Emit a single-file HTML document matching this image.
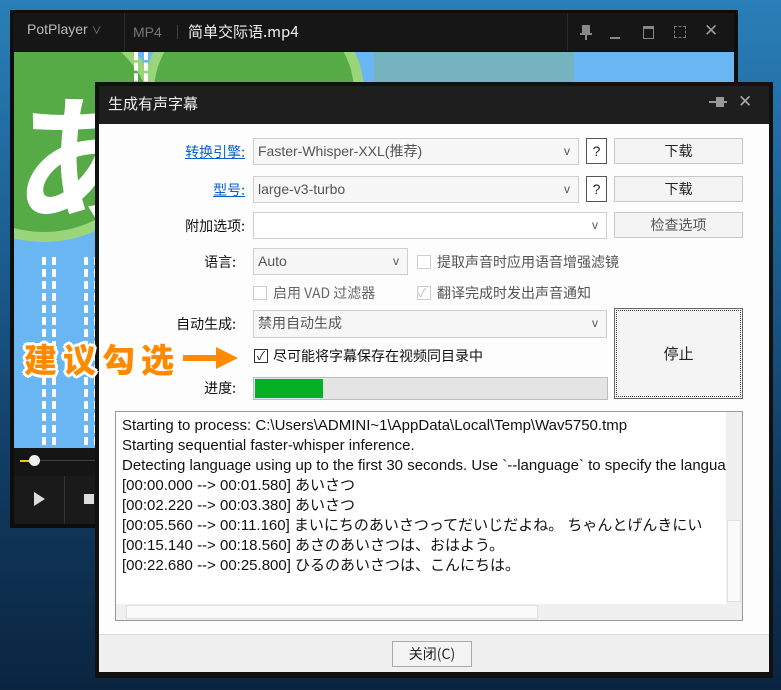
<!DOCTYPE html>
<html><head><meta charset="utf-8"><style>
*{box-sizing:border-box;margin:0;padding:0}
body{width:781px;height:690px;overflow:hidden;position:relative;background:linear-gradient(180deg,#2a7fb8 0%,#1a5a8c 40%,#0f3558 75%,#0a2440 100%);font-family:"Liberation Sans","Noto Sans CJK SC",sans-serif;font-size:14px;color:#111}
.a{position:absolute}
.cjk{font-family:"Noto Sans CJK SC","Liberation Sans",sans-serif}
.combo{position:absolute;background:#f7f7f7;border:1px solid #cfcfcf;color:#555;font-size:14px;padding-left:4px;line-height:25px}
.combo i{position:absolute;right:8px;top:0;font-style:normal;color:#555;font-size:12px}
.btn{position:absolute;background:#f4f4f4;border:1px solid #c8c8c8;text-align:center;color:#222;font-size:14px;line-height:24px}
.lbl{position:absolute;text-align:right;font-size:14px}
.cb{position:absolute;width:14px;height:14px;border:1px solid #888;background:#fff}
.log div{height:20px;line-height:20px;white-space:nowrap}
.ic{position:absolute;top:20px;color:#999;font-size:15px}
</style></head><body>
<!-- player -->
<div class="a" style="left:10px;top:10px;width:728px;height:518px;background:#0d0d0d"></div>
<div class="a" style="left:13px;top:13px;width:721px;height:38px;background:#161616"></div>
<div class="a" style="left:27px;top:21px;color:#bbb;font-size:14px">PotPlayer <span style="font-size:10px;color:#888">&#8744;</span></div>
<div class="a" style="left:124px;top:13px;width:1px;height:38px;background:#2a2a2a"></div>
<div class="a" style="left:133px;top:24px;color:#777;font-size:14px">MP4</div>
<div class="a" style="left:177px;top:25px;width:1px;height:14px;background:#444"></div>
<div class="a cjk" style="left:188px;top:21px;color:#eee;font-size:15px">简单交际语.mp4</div>
<div class="a" style="left:567px;top:13px;width:1px;height:38px;background:#2a2a2a"></div>
<div class="a" style="left:582px;top:25px;width:8px;height:8px;background:#888"></div>
<div class="a" style="left:580px;top:33px;width:12px;height:2px;background:#888"></div>
<div class="a" style="left:585px;top:35px;width:2px;height:5px;background:#888"></div>
<div class="a" style="left:610px;top:37px;width:10px;height:2px;background:#888"></div>
<div class="a" style="left:643px;top:26px;width:11px;height:13px;border:1px solid #888;border-top:3px solid #888"></div>
<div class="a" style="left:674px;top:26px;width:12px;height:12px;border:1px dashed #777"></div>
<div class="ic" style="left:704px;top:21px;font-size:17px">✕</div>
<div class="a" style="left:14px;top:52px;width:720px;height:396px;background:#6ab6f2;overflow:hidden">
 <div class="a" style="left:-90px;top:-40px;width:240px;height:230px;border-radius:50%;background:#56ab47;border:10px solid #9ad57c"></div>
 <div class="a" style="left:130px;top:-60px;width:220px;height:200px;border-radius:50%;background:#56ab47;border:10px solid #9ad57c"></div>
 <div class="a cjk" style="left:0px;top:30px;color:#fff;font-size:140px;font-weight:bold;line-height:1">あ</div>
 <div class="a" style="left:28px;top:205px;width:14px;height:200px;border-left:4px dashed #fff;border-right:4px dashed #fff"></div>
 <div class="a" style="left:70px;top:205px;width:14px;height:200px;border-left:4px dashed #fff;border-right:4px dashed #fff"></div>
 <div class="a" style="left:120px;top:0;width:14px;height:40px;border-left:4px dashed #fff;border-right:4px dashed #fff"></div>
 <div class="a" style="left:360px;top:0;width:200px;height:30px;background:#7fb08a;opacity:.5"></div>
</div>
<div class="a" style="left:14px;top:448px;width:720px;height:28px;background:#151515"></div>
<div class="a" style="left:20px;top:460px;width:14px;height:2px;background:#e8c800"></div>
<div class="a" style="left:29px;top:455px;width:11px;height:11px;border-radius:50%;background:#eee"></div>
<div class="a" style="left:40px;top:460px;width:60px;height:1px;background:#444"></div>
<div class="a" style="left:14px;top:476px;width:720px;height:48px;background:#1a1a1a"></div>
<div class="a" style="left:64px;top:476px;width:1px;height:48px;background:#333"></div>
<div class="a" style="left:34px;top:492px;width:0;height:0;border-left:11px solid #ddd;border-top:7px solid transparent;border-bottom:7px solid transparent"></div>
<div class="a" style="left:84px;top:494px;width:10px;height:10px;background:#ddd"></div>
<!-- dialog -->
<div class="a" style="left:95px;top:82px;width:678px;height:596px;background:#111"></div>
<div class="a" style="left:99px;top:86px;width:670px;height:38px;background:#1e1e1e"></div>
<div class="a cjk" style="left:108px;top:93px;color:#eee;font-size:15px">生成有声字幕</div>
<div class="a" style="left:709px;top:101px;width:8px;height:2px;background:#999"></div>
<div class="a" style="left:716px;top:97px;width:8px;height:10px;background:#999"></div>
<div class="a" style="left:724px;top:101px;width:3px;height:2px;background:#999"></div>
<div class="a" style="left:738px;top:92px;color:#aaa;font-size:17px">✕</div>
<div class="a" style="left:99px;top:124px;width:670px;height:511px;background:#fdfdfd"></div>
<div class="a" style="left:99px;top:634px;width:670px;height:38px;background:#f0f0f0;border-top:1px solid #ddd"></div>

<div class="lbl cjk" style="left:140px;top:142px;width:105px;color:#0b5fd0;text-decoration:underline">转换引擎:</div>
<div class="combo" style="left:253px;top:138px;width:326px;height:27px">Faster-Whisper-XXL(推荐)<i>v</i></div>
<div class="btn" style="left:586px;top:138px;width:21px;height:26px;border-color:#555;background:#fff">?</div>
<div class="btn cjk" style="left:614px;top:138px;width:129px;height:26px">下载</div>

<div class="lbl cjk" style="left:140px;top:180px;width:105px;color:#0b5fd0;text-decoration:underline">型号:</div>
<div class="combo" style="left:253px;top:176px;width:326px;height:27px">large-v3-turbo<i>v</i></div>
<div class="btn" style="left:586px;top:176px;width:21px;height:26px;border-color:#555;background:#fff">?</div>
<div class="btn cjk" style="left:614px;top:176px;width:129px;height:26px">下载</div>

<div class="lbl cjk" style="left:140px;top:216px;width:105px">附加选项:</div>
<div class="combo" style="left:253px;top:212px;width:354px;height:27px;background:#fff"><i>v</i></div>
<div class="btn cjk" style="left:614px;top:212px;width:129px;height:26px;color:#555">检查选项</div>

<div class="lbl cjk" style="left:140px;top:252px;width:96px">语言:</div>
<div class="combo" style="left:253px;top:248px;width:155px;height:27px">Auto<i>v</i></div>
<div class="cb" style="left:417px;top:255px;border-color:#ccc"></div>
<div class="a cjk" style="left:437px;top:252px;color:#555">提取声音时应用语音增强滤镜</div>

<div class="cb" style="left:253px;top:286px;border-color:#ccc"></div>
<div class="a cjk" style="left:273px;top:283px;color:#666">启用 VAD 过滤器</div>
<div class="cb" style="left:417px;top:286px;border-color:#ccc;color:#bbb;font-size:12px;line-height:12px">✓</div>
<div class="a cjk" style="left:437px;top:283px;color:#555">翻译完成时发出声音通知</div>

<div class="lbl cjk" style="left:140px;top:314px;width:96px">自动生成:</div>
<div class="combo" style="left:253px;top:310px;width:354px;height:28px">禁用自动生成<i>v</i></div>
<div class="btn cjk" style="left:614px;top:308px;width:129px;height:91px;line-height:89px;border:1px solid #666;outline:1px dotted #444;outline-offset:-3px;font-size:15px">停止</div>

<div class="cb" style="left:254px;top:349px;border-color:#333;font-size:12px;line-height:12px;text-align:center">✓</div>
<div class="a cjk" style="left:273px;top:346px">尽可能将字幕保存在视频同目录中</div>

<div class="lbl cjk" style="left:140px;top:378px;width:96px">进度:</div>
<div class="a" style="left:253px;top:377px;width:355px;height:23px;background:#e4e4e4;border:1px solid #bcbcbc"></div>
<div class="a" style="left:255px;top:379px;width:68px;height:19px;background:#06b025"></div>

<div class="a cjk" style="left:24px;top:338px;font-size:33px;font-weight:900;color:#ff8a00;letter-spacing:6px;line-height:40px;text-shadow:2px 2px 0 #fff,-2px -2px 0 #fff,2px -2px 0 #fff,-2px 2px 0 #fff,0 3px 0 #fff,3px 0 0 #fff,0 -3px 0 #fff,-3px 0 0 #fff">建议勾选</div>
<div class="a" style="left:183px;top:355px;width:36px;height:6px;background:#ff8a00"></div>
<div class="a" style="left:216px;top:347px;width:0;height:0;border-left:22px solid #ff8a00;border-top:11px solid transparent;border-bottom:11px solid transparent"></div>

<div class="a log cjk" style="left:115px;top:411px;width:628px;height:210px;background:#fff;border:1px solid #999;padding:4px 0 0 6px;overflow:hidden;font-size:15px;font-family:'Liberation Sans','Noto Sans CJK JP',sans-serif">
<div>Starting to process: C:\Users\ADMINI~1\AppData\Local\Temp\Wav5750.tmp</div>
<div>Starting sequential faster-whisper inference.</div>
<div>Detecting language using up to the first 30 seconds. Use `--language` to specify the langua</div>
<div>[00:00.000 --&gt; 00:01.580] あいさつ</div>
<div>[00:02.220 --&gt; 00:03.380] あいさつ</div>
<div>[00:05.560 --&gt; 00:11.160] まいにちのあいさつってだいじだよね。 ちゃんとげんきにい</div>
<div>[00:15.140 --&gt; 00:18.560] あさのあいさつは、おはよう。</div>
<div>[00:22.680 --&gt; 00:25.800] ひるのあいさつは、こんにちは。</div>
</div>
<div class="a" style="left:726px;top:412px;width:16px;height:192px;background:#f0f0f0"></div>
<div class="a" style="left:727px;top:520px;width:14px;height:82px;background:#fafafa;border:1px solid #e0e0e0"></div>
<div class="a" style="left:116px;top:604px;width:626px;height:16px;background:#f0f0f0"></div>
<div class="a" style="left:126px;top:605px;width:412px;height:14px;background:#fafafa;border:1px solid #e0e0e0"></div>

<div class="btn cjk" style="left:392px;top:641px;width:80px;height:26px;border-color:#aaa">关闭(C)</div>
</body></html>
